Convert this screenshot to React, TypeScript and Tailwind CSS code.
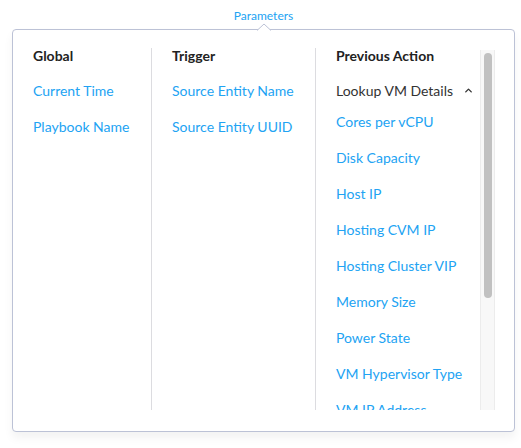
import { ChevronUp } from 'lucide-react';

const globals = ['Current Time', 'Playbook Name'];
const triggers = ['Source Entity Name', 'Source Entity UUID'];
const previous = [
  'Cores per vCPU',
  'Disk Capacity',
  'Host IP',
  'Hosting CVM IP',
  'Hosting Cluster VIP',
  'Memory Size',
  'Power State',
  'VM Hypervisor Type',
  'VM IP Address',
  'VM Name',
];

export default function App() {
  return (
    <div
      className="w-[521px] h-[448px] bg-white text-[14px]"
      style={{ fontFamily: 'Lato, "Open Sans", sans-serif' }}
    >
      <div className="h-[29px] flex justify-center pt-[8px] pl-[6px]">
        <span className="text-[12px] leading-4 text-[#22a3f3]">Parameters</span>
      </div>

      <div className="relative ml-[12px] w-[503px] h-[403px] border border-[#bcc2d6] rounded-[4px] bg-white shadow-[0_6px_10px_rgba(0,0,0,0.05)] pt-[18px] pb-[21px] pr-[19px] flex">
        {/* popover arrow */}
        <svg
          className="absolute left-[244px] top-[-7px]"
          width="14"
          height="8"
          viewBox="0 0 14 8"
        >
          <path d="M0 7.5 L7 1 L14 7.5" fill="white" stroke="#bcc2d6" strokeWidth="1" />
        </svg>

        {/* Global */}
        <div className="w-[138px] pl-5">
          <div className="h-4 leading-4 font-bold text-[#222]">Global</div>
          <div className="mt-[8px]">
            {globals.map((g) => (
              <div key={g} className="h-9 flex items-center text-[#22a3f3]">
                {g}
              </div>
            ))}
          </div>
        </div>

        {/* Trigger */}
        <div className="w-[164px] border-l border-[#dcdce0] pl-5">
          <div className="h-4 leading-4 font-bold text-[#222]">Trigger</div>
          <div className="mt-[8px]">
            {triggers.map((t) => (
              <div key={t} className="h-9 flex items-center text-[#22a3f3]">
                {t}
              </div>
            ))}
          </div>
        </div>

        {/* Previous Action */}
        <div className="flex-1 border-l border-[#dcdce0] flex">
          <div className="flex-1 overflow-hidden pl-5">
            <div className="h-4 leading-4 font-bold text-[#222]">Previous Action</div>
            <div className="mt-[14px] h-[25px] flex items-center justify-between pr-[6px] text-[#333]">
              <span>Lookup VM Details</span>
              <ChevronUp size={11} strokeWidth={3} className="text-[#333]" />
            </div>
            {previous.map((p) => (
              <div key={p} className="h-9 flex items-center text-[#22a3f3] whitespace-nowrap">
                {p}
              </div>
            ))}
          </div>
          <div className="w-[15px] mt-[2px] bg-[#f8f8f8] border-x border-[#ececec] pt-[3px] flex justify-center">
            <div className="w-[8px] h-[245px] rounded-full bg-[#c1c1c1]" />
          </div>
        </div>
      </div>
    </div>
  );
}
